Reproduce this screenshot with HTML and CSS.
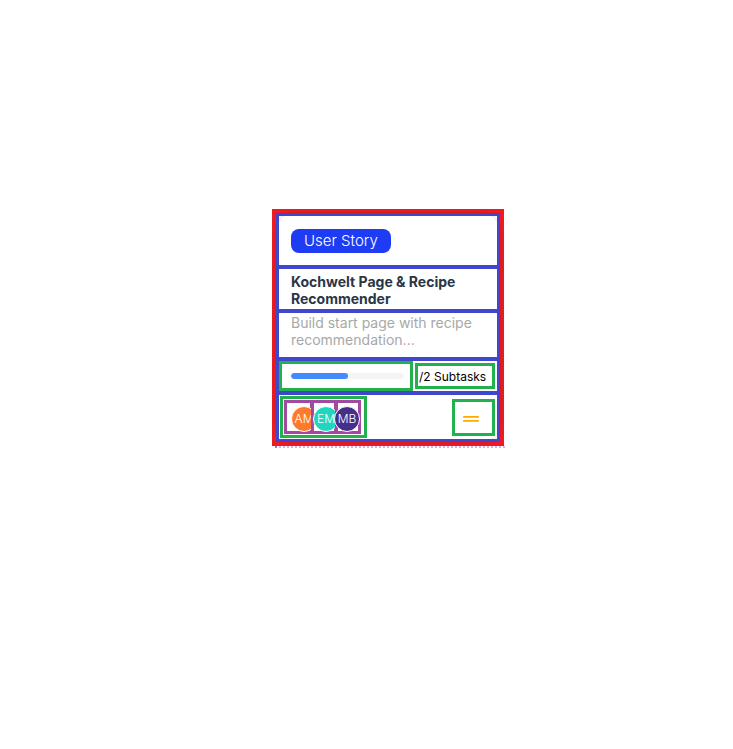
FILE: index.html
```html
<!DOCTYPE html>
<html lang="en">
<head>
<meta charset="utf-8">
<title>Task card</title>
<link rel="stylesheet" href="styles.css">
</head>
<body>
<div class="stage">
  <div class="frame">
    <div class="card">
      <div class="sec sec-head"><span class="tag">User Story</span></div>
      <div class="sec sec-title">Kochwelt Page &amp; Recipe Recommender</div>
      <div class="sec sec-desc">Build start page with recipe recommendation...</div>
      <div class="sec sec-progress">
        <div class="g g-bar"><div class="track"><div class="fill" style="width:50%"></div></div></div>
        <div class="g g-sub">/2 Subtasks</div>
      </div>
      <div class="sec sec-foot">
        <div class="g g-avatars">
          <div class="pbox p1"><span class="av av-am">AM</span></div>
          <div class="pbox p2"><span class="av av-em">EM</span></div>
          <div class="pbox p3"><span class="av av-mb">MB</span></div>
        </div>
        <div class="g g-menu">
          <svg width="16" height="6" viewBox="0 0 16 6" aria-hidden="true">
            <rect x="0" y="0" width="16" height="1.8" rx="0.9" fill="#ffa800"/>
            <rect x="0" y="4" width="16" height="1.8" rx="0.9" fill="#ffa800"/>
          </svg>
        </div>
      </div>
    </div>
  </div>
  <div class="trail"></div>
</div>
</body>
</html>
```
FILE: styles.css
```css
* { box-sizing: border-box; }
body {
  margin: 0;
  background: #fff;
  font-family: Inter, "Noto Sans", sans-serif;
}
.stage {
  padding: 209px 0 0 272px;
}
.frame {
  width: 232px;
  border: 4px solid #ed1c24;
}
.card {
  background: #fff;
  border-radius: 20px;
  box-shadow: 0 0 6px rgba(0, 0, 0, 0.14);
}
.sec {
  border: 3px solid #3f48cc;
}
.sec + .sec {
  border-top-width: 1px;
}
.sec-head {
  height: 55px;
  padding: 13px 12px 0;
}
.tag {
  display: inline-block;
  height: 24px;
  line-height: 24px;
  padding: 0 13px;
  border-radius: 8px;
  background: #1f3cf5;
  color: #fff;
  font-size: 15px;
  font-weight: 300;
}
.sec-title {
  height: 44px;
  padding: 4px 12px 0;
  font-size: 14px;
  line-height: 17px;
  font-weight: 700;
  color: #2a3647;
}
.sec-desc {
  height: 48px;
  padding: 1px 12px 0;
  font-size: 14px;
  line-height: 17px;
  color: #a8a8a8;
}
.g {
  border: 3px solid #22b14c;
}
.sec-progress {
  height: 34px;
  display: flex;
  align-items: center;
}
.g-bar {
  width: 134px;
  height: 30px;
  padding-left: 9px;
  display: flex;
  align-items: center;
}
.track {
  width: 113px;
  height: 6px;
  border-radius: 3px;
  background: #f4f4f4;
  overflow: hidden;
}
.fill {
  height: 100%;
  border-radius: 3px;
  background: #4589ff;
}
.g-sub {
  margin-left: 2px;
  width: 80px;
  height: 26px;
  padding-left: 1px;
  display: flex;
  align-items: center;
  font-size: 12px;
  color: #000;
}
.sec-foot {
  height: 48px;
  display: flex;
  align-items: center;
  justify-content: space-between;
}
.g-avatars {
  margin-left: 1px;
  width: 87px;
  height: 42px;
  display: flex;
  align-items: center;
  padding-left: 1px;
}
.pbox {
  height: 34px;
  border: 3px solid #a349a4;
  display: flex;
  align-items: center;
}
.p1 { width: 29px; }
.p2 { width: 26px; margin-left: -2px; }
.p3 { width: 26px; margin-left: -2px; }
.av {
  flex-shrink: 0;
  width: 26px;
  height: 26px;
  margin-top: 3px;
  border-radius: 50%;
  border: 1px solid #fff;
  display: flex;
  align-items: center;
  justify-content: center;
  color: #fff;
  font-size: 12px;
  font-weight: 300;
}
.p1 .av { margin-left: 4px; }
.p2 .av { margin-left: -1px; }
.p3 .av { margin-left: -4px; }
.av-am { background: #ff7a2a; }
.av-em { background: #1fd7c1; }
.av-mb { background: #462f8a; }
.g-menu {
  margin-right: 2px;
  width: 43px;
  height: 37px;
  padding: 14px 0 0 8px;
}
.g-menu svg { display: block; }
.trail {
  position: relative;
  margin-left: 3px;
  width: 230px;
  border-top: 2px dotted #dcb0e8;
}
.trail::before {
  content: "";
  position: absolute;
  left: 0;
  top: -2px;
  width: 2px;
  height: 5px;
  background: #a36ee0;
}
```
